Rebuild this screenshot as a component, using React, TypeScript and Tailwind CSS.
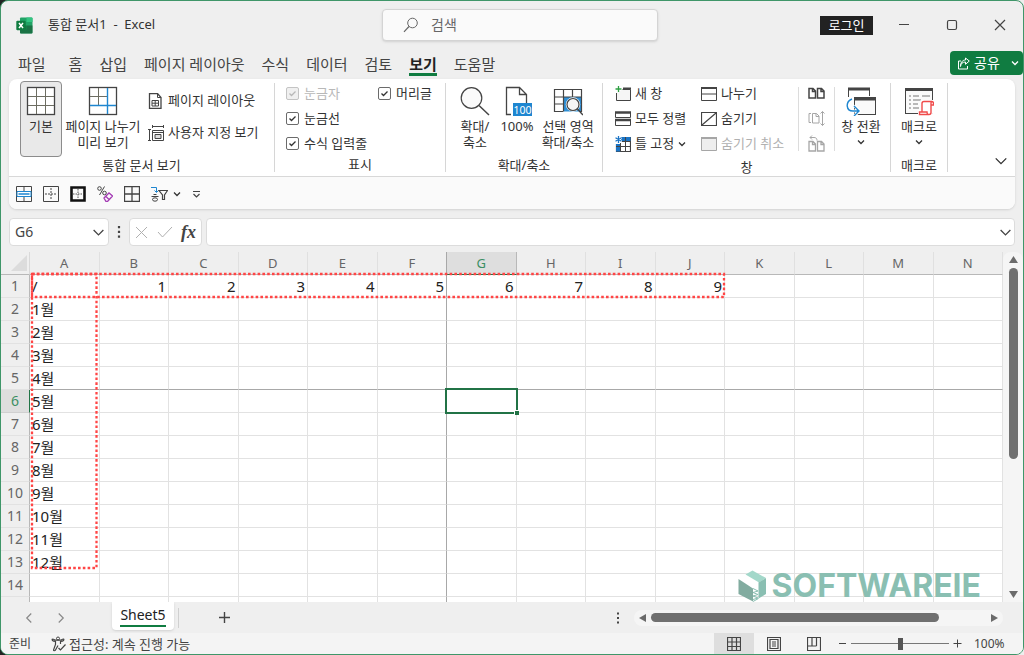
import React from 'react';

const menuTabs = ['홈', '삽입', '페이지 레이아웃', '수식', '데이터', '검토', '보기', '도움말'];
const columns = ['A', 'B', 'C', 'D', 'E', 'F', 'G', 'H', 'I', 'J', 'K', 'L', 'M', 'N'];
const rows = Array.from({ length: 14 }, (_, i) => i + 1);

const DARK = '#444444';
const BLUE = '#1e86d0';

function cellValue(row: number, col: number) {
  if (row === 1) {
    if (col === 0) return '/';
    return col <= 9 ? String(col) : '';
  }
  return col === 0 && row <= 13 ? `${row - 1}월` : '';
}

interface IconProps {
  size?: number;
  children: React.ReactNode;
  className?: string;
  color?: string;
}

function Icon({ size = 16, children, className = '', color = DARK }: IconProps) {
  return (
    <svg
      width={size}
      height={size}
      viewBox={`0 0 ${size} ${size}`}
      fill="none"
      stroke={color}
      className={`shrink-0 ${className}`}
      aria-hidden="true"
    >
      {children}
    </svg>
  );
}

function Chevron({ className = '', size = 8 }: { className?: string; size?: number }) {
  return (
    <svg width={size} height={size} viewBox="0 0 8 8" fill="none" stroke="currentColor" strokeWidth={size > 8 ? 0.8 : 1.3} className={`shrink-0 ${className}`} aria-hidden="true">
      <path d="M1 2.5 4 5.5 7 2.5" />
    </svg>
  );
}

const DocShape = ({ x, y }: { x: number; y: number }) => (
  <path d={`M${x} ${y}h4l2.500 2.500v7h-6.500zM${x + 3.5} ${y}v3h3`} />
);

function ExcelLogo() {
  return (
    <svg width="17" height="17" viewBox="0 0 17 17" className="shrink-0" aria-hidden="true">
      <rect x="4" y="0.5" width="12.5" height="16" rx="1" fill="#21a366" />
      <path d="M10.5.5h5a1 1 0 0 1 1 1v3.500h-6z" fill="#33c481" />
      <path d="M4 8.500h6.500v4H4z" fill="#107c41" />
      <path d="M4 12.500h12.500v3a1 1 0 0 1-1 1H5a1 1 0 0 1-1-1zM10.500 8.500h6v4h-6z" fill="#185c37" opacity=".7" />
      <rect x="0.300" y="3.800" width="9.400" height="9.400" rx="1" fill="#107c41" />
      <path d="M3 6l4 5M7 6l-4 5" stroke="#fff" strokeWidth="1.500" />
    </svg>
  );
}

function TitleBar() {
  return (
    <header className="flex h-12 items-center">
      <div className="flex flex-1 items-center gap-[15px] pl-[15px] text-[13px] text-[#333]">
        <ExcelLogo />
        <h1 className="whitespace-pre">통합 문서1  -  Excel</h1>
      </div>
      <label className="flex h-8 w-[276px] items-center gap-3 rounded border border-[#d4d4d4] bg-[#fafafa] pl-5 shadow-sm">
        <Icon color="#666">
          <circle cx="9.500" cy="6" r="4.800" />
          <path d="M6 9.500 1 14.800" strokeWidth="1.200" />
        </Icon>
        <input aria-label="검색" placeholder="검색" className="w-40 bg-transparent text-sm outline-none placeholder:text-[#666]" />
      </label>
      <div className="flex w-[365px] items-center justify-end text-[#333]">
        <button className="mr-[7px] h-[19px] w-[53px] bg-[#222] text-[13px] leading-[18px] text-white">로그인</button>
        <button aria-label="최소화" className="flex h-8 w-12 items-center justify-center">
          <Icon size={12}><path d="M1 5.500h10" /></Icon>
        </button>
        <button aria-label="최대화" className="flex h-8 w-12 items-center justify-center">
          <Icon size={12}><rect x="1.500" y="1.500" width="9" height="9" rx="1.500" strokeWidth="1.200" /></Icon>
        </button>
        <button aria-label="닫기" className="flex h-8 w-[47px] items-center justify-center">
          <Icon size={12}><path d="m1 1 10 10M11 1 1 11" strokeWidth="1.200" /></Icon>
        </button>
      </div>
    </header>
  );
}

function MenuTabs() {
  return (
    <nav className="flex h-[30px] items-start pl-[17px] text-[15px] leading-[30px] text-[#444]">
      <button className="mr-[23px]">파일</button>
      <div className="flex flex-1 gap-[17px]">
        {menuTabs.map((tab) => (
          <button
            key={tab}
            className={tab === '보기' ? 'h-[27px] border-b-[3px] border-[#107c41] font-bold text-[#222]' : 'h-[27px]'}
          >
            {tab}
          </button>
        ))}
      </div>
      <button className="mt-[2px] flex h-6 w-[73px] items-center rounded bg-[#107c41] pl-[7px] text-sm text-white">
        <Icon size={13} color="#fff">
          <path d="M4 4H1.500v8h9V9" />
          <path d="M3.500 9.500c.300-3 2-4.500 5-4.500v2.300L12.300 4 8.500 1v2c-3.500 0-5 3-5 6.500z" />
        </Icon>
        <span className="ml-1">공유</span>
        <Chevron className="ml-auto mr-1" />
      </button>
    </nav>
  );
}

interface GroupProps {
  label: string;
  width: string;
  children: React.ReactNode;
}

function RibbonGroup({ label, width, children }: GroupProps) {
  return (
    <section className={`my-1 flex shrink-0 flex-col border-r border-[#d6d6d6] ${width}`}>
      <div className="flex h-[76px]">{children}</div>
      <h2 className="text-center leading-4">{label}</h2>
    </section>
  );
}

interface LargeButtonProps {
  icon: React.ReactNode;
  lines: string[];
  active?: boolean;
  menu?: boolean;
  className?: string;
}

function LargeButton({ icon, lines, active, menu, className = '' }: LargeButtonProps) {
  return (
    <button
      className={`-mt-[2px] flex h-[76px] shrink-0 flex-col items-center rounded border pt-1 leading-4 ${
        active ? 'border-[#8c8c8c] bg-[#e9e9e9]' : 'border-transparent'
      } ${className}`}
    >
      {icon}
      <span className="mt-[2px] flex flex-col items-center whitespace-nowrap">
        {lines.map((line) => (
          <span key={line}>{line}</span>
        ))}
      </span>
      {menu ? <Chevron className="mt-1" /> : null}
    </button>
  );
}

interface SmallButtonProps {
  icon: React.ReactNode;
  label: string;
  disabled?: boolean;
  menu?: boolean;
}

function SmallButton({ icon, label, disabled, menu }: SmallButtonProps) {
  return (
    <button disabled={disabled} className="flex h-[25px] items-center gap-1 whitespace-nowrap disabled:text-[#b0b0b0]">
      {icon}
      <span>{label}</span>
      {menu ? <Chevron /> : null}
    </button>
  );
}

function CheckOption({ label, disabled }: { label: string; disabled?: boolean }) {
  return (
    <label className={`flex h-[25px] items-center gap-[5px] whitespace-nowrap ${disabled ? 'text-[#b8b8b8]' : ''}`}>
      <span className="grid size-[13px]">
        <input
          type="checkbox"
          defaultChecked
          disabled={disabled}
          className="size-[13px] appearance-none rounded-[2px] border border-[#6b6b6b] bg-white [grid-area:1/1] disabled:border-[#c4c4c4] disabled:bg-[#f0f0f0]"
        />
        <svg width="13" height="13" viewBox="0 0 13 13" fill="none" stroke="currentColor" strokeWidth="1.300" className="pointer-events-none [grid-area:1/1]" aria-hidden="true">
          <path d="m3.500 6.500 2 2L9.500 4.500" />
        </svg>
      </span>
      {label}
    </label>
  );
}

function ViewsGroup() {
  return (
    <RibbonGroup label="통합 문서 보기" width="w-[266px]">
      <LargeButton
        active
        className="ml-[11px] w-[42px]"
        lines={['기본']}
        icon={
          <Icon size={30}>
            <rect x="1.500" y="1.500" width="27" height="27" fill="#fff" strokeWidth="1.300" />
            <path d="M10.500 2v26M19.500 2v26M2 10.500h26M2 19.500h26" stroke="#6d6d62" />
          </Icon>
        }
      />
      <LargeButton
        className="ml-px w-20"
        lines={['페이지 나누기', '미리 보기']}
        icon={
          <Icon size={30}>
            <rect x="1.500" y="1.500" width="27" height="27" strokeWidth="1.300" />
            <path d="M10.500 2v17M2 10.500h17" stroke="#6d6d62" />
            <path d="M19.500 2v26M2 19.500h26" stroke={BLUE} strokeWidth="1.400" />
          </Icon>
        }
      />
      <div className="ml-[5px] mt-[5px] flex flex-col gap-[7px]">
        <SmallButton
          label="페이지 레이아웃"
          icon={
            <Icon>
              <path d="M1.500.500h8l3.500 4v11H1.500z" strokeWidth="1.300" />
              <path d="M9.500.500v4H13M4 7.500h6.500v5.500H4zM4 10.200h6.500M7.200 7.500V13" />
            </Icon>
          }
        />
        <SmallButton
          label="사용자 지정 보기"
          icon={
            <Icon>
              <path d="M0 4.500h3M0 15.500h3M1.500 4.500v11M4.500 1.500h11M4.500 0v3M15.500 0v3" />
              <path d="M4.500 5.500h11v10h-11zM4.500 7.500h11" />
              <path d="M7 9.500h6v4H7z" fill="#ddd" />
            </Icon>
          }
        />
      </div>
    </RibbonGroup>
  );
}

function ShowGroup() {
  return (
    <RibbonGroup label="표시" width="w-[171px]">
      <div className="ml-[11px] flex w-[92px] flex-col -mt-[2px]">
        <CheckOption label="눈금자" disabled />
        <CheckOption label="눈금선" />
        <CheckOption label="수식 입력줄" />
      </div>
      <div className="-mt-[2px]">
        <CheckOption label="머리글" />
      </div>
    </RibbonGroup>
  );
}

function ZoomGroup() {
  return (
    <RibbonGroup label="확대/축소" width="w-[157px]">
      <LargeButton
        className="ml-[7px] w-11"
        lines={['확대/', '축소']}
        icon={
          <Icon size={30}>
            <circle cx="11.500" cy="12" r="10.300" fill="#fafafa" strokeWidth="1.200" />
            <path d="m19 19.500 10 9.500" strokeWidth="1.500" />
          </Icon>
        }
      />
      <LargeButton
        className="w-10"
        lines={['100%']}
        icon={
          <Icon size={30}>
            <path d="M9 28.500H4.500v-27h13l7 7V17M17.500 1.500v7h7" strokeWidth="1.300" />
            <rect x="11" y="17" width="19" height="13" fill={BLUE} stroke="none" />
            <text x="20.500" y="27.500" textAnchor="middle" fontSize="10.500" fill="#fff" stroke="none">100</text>
          </Icon>
        }
      />
      <LargeButton
        className="w-[62px]"
        lines={['선택 영역', '확대/축소']}
        icon={
          <Icon size={30}>
            <path d="M10.500 11h18v14.500h-18z" fill="#2e8fd6" stroke="none" />
            <path d="M10 25.500H1.500v-22h27v22H27M1.500 11h27M1.500 18h9M10.500 3.500v22M19.500 3.500V11" strokeWidth="1.200" />
            <circle cx="20" cy="18.500" r="7.200" fill="#fff" stroke="none" />
            <circle cx="20" cy="18.500" r="6" fill="#f5f5f5" strokeWidth="1.200" />
            <path d="m24.500 23 5.500 6" strokeWidth="1.500" />
          </Icon>
        }
      />
    </RibbonGroup>
  );
}

function WindowGroup() {
  return (
    <RibbonGroup label="창" width="w-[288px]">
      <div className="-mt-[2px] ml-3 w-[86px]">
        <SmallButton
          label="새 창"
          icon={
            <Icon>
              <path d="M1.500 7v7.500h14V3.500h-8" fill="#f5f5f5" />
              <path d="M8 2.500h8" strokeWidth="2" />
              <path d="M3.500 0v6M.500 3h6" stroke="#2ea043" strokeWidth="1.300" />
            </Icon>
          }
        />
        <SmallButton
          label="모두 정렬"
          icon={
            <Icon>
              <path d="M.500 1.500h15v5H.500zM.500 9.500h15v5H.500z" />
              <path d="M0 1.500h16M0 9h16" strokeWidth="2.500" />
            </Icon>
          }
        />
        <SmallButton
          label="틀 고정"
          menu
          icon={
            <Icon>
              <path d="M8 1.500h7.500v14H1.500V8" strokeWidth="1.200" />
              <path d="M6 1h9.500v4H6zM1 8h4.500v7.500H1z" fill="#1b74c5" stroke="none" />
              <path d="M10.500 1v14.500M5.500 7v8.500M1 10.500h14.500M7 5.500h8.500" />
              <path d="M3.500 0v7M.500 1.700l6 3.500M6.500 1.700l-6 3.500" stroke="#fff" strokeWidth="2.500" />
              <path d="M3.500 0v7M.500 1.700l6 3.500M6.500 1.700l-6 3.500" stroke="#1b74c5" strokeWidth="1.300" />
            </Icon>
          }
        />
      </div>
      <div className="-mt-[2px] w-[97px]">
        <SmallButton
          label="나누기"
          icon={
            <Icon>
              <path d="M.500 1.500h15v13H.500zM.500 8h15" />
              <path d="M0 2h16" strokeWidth="2" />
            </Icon>
          }
        />
        <SmallButton
          label="숨기기"
          icon={<Icon><path d="M.500 1.500h15v13H.500zM1 14 15 2" strokeWidth="1.200" /></Icon>}
        />
        <SmallButton
          label="숨기기 취소"
          disabled
          icon={
            <Icon color="#a6a6a6">
              <path d="M.500 1.500h15v13H.500z" fill="#eee" />
              <path d="M0 2h16" strokeWidth="2" />
            </Icon>
          }
        />
      </div>
      <div className="mb-2 mt-1 flex border-x border-[#dcdcdc] px-[9px]">
        <div className="-mt-[6px] flex flex-col">
          <button aria-label="나란히 보기" className="h-[25px] shrink-0">
            <Icon size={17}><g strokeWidth="1.500"><DocShape x={1} y={3.5} /><DocShape x={9.5} y={3.5} /></g></Icon>
          </button>
          <button aria-label="동시 스크롤" disabled className="h-[25px] shrink-0">
            <Icon size={17} color="#a6a6a6">
              <path d="M3 3.500H1v9h2" />
              <DocShape x={4.5} y={3.5} />
              <path d="M14.500 1.500v14M12.500 3.500l2-2 2 2M12.500 13.500l2 2 2-2" />
            </Icon>
          </button>
          <button aria-label="창 위치 다시 정렬" disabled className="h-[25px] shrink-0">
            <Icon size={17} color="#a6a6a6">
              <g strokeWidth="1.300"><DocShape x={1} y={6.5} /><DocShape x={9.5} y={6.5} /></g>
              <path d="M2 2.500h4c2 0 3 1 3 3M4 .500 2 2.500l2 2" />
            </Icon>
          </button>
        </div>
      </div>
      <LargeButton
        className="w-[52px]"
        menu
        lines={['창 전환']}
        icon={
          <Icon size={30}>
            <path d="M2.500 11V2.500h21V10" />
            <path d="M2 3h22" strokeWidth="3" />
            <rect x="8.500" y="11.500" width="21" height="17" fill="#fafafa" />
            <path d="M8 13h22" strokeWidth="3" />
            <path d="M6 12c-7 3-7 13 1 13h6M8 19.500l5.500 5.500L8 30" stroke="#fff" strokeWidth="3" />
            <path d="M6 13c-7 3-6 12 1 12h5.500M8 20l5 5-5 5" stroke={BLUE} strokeWidth="1.400" />
          </Icon>
        }
      />
    </RibbonGroup>
  );
}

function MacroGroup() {
  return (
    <RibbonGroup label="매크로" width="w-[57px]">
      <LargeButton
        className="w-full"
        menu
        lines={['매크로']}
        icon={
          <Icon size={30}>
            <rect x="1.500" y="2.500" width="27" height="25" fill="#fafafa" />
            <path d="M1 3.500h28" strokeWidth="3" />
            <path d="M5 10h2M9 10h6M18 10h8M5 14h2M9 14h8M5 18h2M9 18h5M5 22h2M9 22h6" stroke="#777" />
            <path d="M18 15.500h11.500v3h-2v8.500a2 2 0 0 1-2 2H15.500v-3H18z" fill="#fff" stroke="#fff" strokeWidth="3" />
            <path
              d="M18 26V17.500a2 2 0 0 1 2-2h7.500a2 2 0 0 1 2 2v1.500H27v7.500a2 2 0 0 1-2 2h-9.500V26h7.500c0 3 2 2.500 2 2.500M27 19v-2c0-1 1-1.500 1-1.500"
              stroke="#f04b4b"
              strokeWidth="1.400"
            />
          </Icon>
        }
      />
    </RibbonGroup>
  );
}

function QuickAccess() {
  return (
    <div className="flex h-8 items-center gap-[11px] rounded-b-lg bg-[#fafafa] pt-[2px] pl-[7px]">
      <button aria-label="병합">
        <Icon>
          <path d="M.500.500h15v15H.500zM8 1v4M8 11v4M1 5.500h14M1 10.500h14" />
          <path d="M1 5.500h14v5H1z" stroke={BLUE} fill="#fff" />
          <path d="M2.500 8h11" stroke={BLUE} strokeWidth="1.500" />
        </Icon>
      </button>
      <button aria-label="바깥쪽 테두리">
        <Icon>
          <path d="M.500.500h15v15H.500z" />
          <path d="M8 2v12M2 8h12" strokeDasharray="2 1" />
        </Icon>
      </button>
      <button aria-label="굵은 바깥쪽 테두리">
        <Icon color="#111">
          <path d="M1.500 1.500h13v13h-13z" strokeWidth="2.600" />
          <path d="M8 3v10M3 8h10" strokeDasharray="1.500 1" stroke="#555" />
        </Icon>
      </button>
      <button aria-label="서식 지우기">
        <Icon>
          <circle cx="2.500" cy="2.500" r="1.800" />
          <circle cx="7.500" cy="7" r="1.800" />
          <path d="M7.500.500 2.500 9" />
          <path d="m7 12 5-5 3.500 3-5 5.500H9zM8.500 10l3.500 3.500" stroke="#a43db5" strokeWidth="1.300" />
        </Icon>
      </button>
      <button aria-label="모든 테두리">
        <Icon><path d="M.500.500h15v15H.500zM8 0v16M0 8h16" strokeWidth="1.300" /></Icon>
      </button>
      <button aria-label="필터" className="flex items-center gap-[5px]">
        <Icon size={17}>
          <path d="M0 1.500h5.500V6M3.500 4.500l2 2 2-2" stroke={BLUE} />
          <path d="M2.500 8.500h3M.500 10.500h7" />
          <ellipse cx="4" cy="13.500" rx="2.500" ry="1.700" />
          <path d="M8 4.500h8.500L13.500 9v4.500h-2V9z" strokeWidth="1.200" />
        </Icon>
        <Chevron />
      </button>
      <button aria-label="빠른 실행 도구 모음 사용자 지정">
        <Icon size={9}><path d="M1 1.500h7M1.500 4l3 3 3-3" strokeWidth="1.200" /></Icon>
      </button>
    </div>
  );
}

function Ribbon() {
  return (
    <div className="mx-2 rounded-lg bg-white text-[13px] text-[#333] shadow-sm">
      <div className="flex h-[98px] border-b border-[#d8d8d8]">
        <ViewsGroup />
        <ShowGroup />
        <ZoomGroup />
        <WindowGroup />
        <MacroGroup />
        <button aria-label="리본 축소" className="mb-2 ml-auto mr-[7px] self-end">
          <Chevron size={14} />
        </button>
      </div>
      <QuickAccess />
    </div>
  );
}

function FormulaBar() {
  return (
    <div className="mx-2 mt-[9px] mb-[6px] flex h-7 items-stretch text-[#444]">
      <div className="flex w-[100px] items-center rounded border border-[#dcdcdc] bg-white pl-[5px] pr-[3px]">
        <input aria-label="이름 상자" defaultValue="G6" className="min-w-0 flex-1 bg-transparent text-sm outline-none" />
        <button aria-label="이름 목록"><Chevron size={13} /></button>
      </div>
      <div className="flex w-5 items-center justify-center">
        <Icon size={12}><path d="M6 0v2.200M6 4.800V7M6 9.600v2.200" strokeWidth="2.200" /></Icon>
      </div>
      <div className="flex w-[73px] items-center justify-between rounded border border-[#dcdcdc] bg-white px-[5px]">
        <button aria-label="취소"><Icon size={13} color="#b0b0b0"><path d="m1 1 11 11M12 1 1 12" /></Icon></button>
        <button aria-label="입력"><Icon color="#b0b0b0"><path d="m1 8 4.500 5L15 3" /></Icon></button>
        <button aria-label="함수 삽입" className="font-['Liberation_Serif',serif] text-lg leading-5 font-bold italic">fx</button>
      </div>
      <div className="ml-1 flex flex-1 items-center rounded border border-[#dcdcdc] bg-white pr-[2px]">
        <input aria-label="수식 입력줄" className="flex-1 bg-transparent px-2 text-sm outline-none" />
        <button aria-label="수식 입력줄 확장"><Chevron size={13} /></button>
      </div>
    </div>
  );
}

function MarkedRange({ className }: { className: string }) {
  return (
    <svg className={`pointer-events-none absolute overflow-visible ${className}`} aria-hidden="true">
      <rect width="100%" height="100%" fill="none" stroke="#ff4545" strokeWidth="2.300" strokeDasharray="2.600 2.200" />
    </svg>
  );
}

function Watermark() {
  return (
    <div className="absolute right-[22px] bottom-0 flex h-8 items-center gap-[5px] text-[#8abfb2]">
      <svg width="29" height="32" viewBox="0 0 29 32" aria-hidden="true">
        <path d="M7.500 4.500 14.500.500 28 8l-7 4.500z" fill="#a3d8ca" />
        <path d="M28 8v16l-7.500 4.500v-16z" fill="#8abfb2" />
        <path d="M.500 9 15 18.500v13L.500 24z" fill="#82aca0" />
        <path d="m15 18.500 5 2.500-5 1.500 5 2-5 1.500 5 2-5 1.500M15 31.500l5.500-3" fill="none" stroke="#8abfb2" />
      </svg>
      <span className="font-[Inter,sans-serif] text-[32px] leading-10 font-bold">SOFTWAREIE</span>
    </div>
  );
}

function Sheet() {
  return (
    <div className="relative min-w-0 flex-1">
      <div className="flex h-full flex-col overflow-hidden">
        <table className="w-full table-fixed border-separate border-spacing-0 bg-white">
          <thead>
            <tr className="h-[23px] bg-[#efefef] text-[13px] text-[#666]">
              <th className="w-[29px] border-r border-b border-r-[#d9d9d9] border-b-[#b8b8b8] p-0">
                <svg width="17" height="17" viewBox="0 0 17 17" className="ml-[10px]" aria-hidden="true">
                  <path d="M16 0v16H0z" fill="#dcdcdc" />
                </svg>
              </th>
              {columns.map((name) => (
                <th
                  key={name}
                  scope="col"
                  className={`border-r border-b p-0 leading-[20px] font-normal ${
                    name === 'G'
                      ? 'border-r-[#b8b8b8] border-b-[#217346] bg-[#dedede] text-[#3b8f63]'
                      : name === 'F'
                        ? 'border-r-[#a8a8a8] border-b-[#b8b8b8]'
                        : 'border-r-[#e0e0e0] border-b-[#b8b8b8]'
                  }`}
                >
                  {name}
                </th>
              ))}
            </tr>
          </thead>
          <tbody>
            {rows.map((row) => (
              <tr key={row} className="h-[23px] text-[15px] text-[#222]">
                <th
                  scope="row"
                  className={`border-r border-b p-0 text-sm leading-[22px] font-normal ${
                    row === 6
                      ? 'border-r-[#217346] border-b-[#d0d0d0] bg-[#dedede] text-[#3b8f63]'
                      : 'border-r-[#b8b8b8] border-b-[#e2e2e2] bg-[#efefef] text-[#666]'
                  }`}
                >
                  {row}
                </th>
                {columns.map((name, col) => (
                  <td
                    key={name}
                    className={`relative border-r border-b p-0 px-[2px] leading-[22px] whitespace-nowrap ${
                      name === 'F' ? 'border-r-[#a8a8a8]' : 'border-r-[#e2e2e2]'
                    } ${row === 5 ? 'border-b-[#a8a8a8]' : 'border-b-[#e2e2e2]'} ${
                      row === 1 && col > 0 ? 'text-right' : ''
                    }`}
                  >
                    {cellValue(row, col)}
                    {row === 6 && name === 'G' ? (
                      <span className="absolute -inset-[2px] z-10 border-2 border-[#217346]">
                        <span className="absolute -right-[3px] -bottom-[3px] size-[5px] border-t border-l border-white bg-[#217346]" />
                      </span>
                    ) : null}
                  </td>
                ))}
              </tr>
            ))}
            <tr className="h-[23px]">
              <td className="border-r border-[#b8b8b8] bg-[#efefef] p-0" />
              {columns.map((name) => (
                <td key={name} className={`border-r p-0 ${name === 'F' ? 'border-[#a8a8a8]' : 'border-[#e2e2e2]'}`} />
              ))}
            </tr>
          </tbody>
        </table>
      </div>
      <MarkedRange className="top-[22px] left-[31px] h-[23px] w-[calc((100%-29px)/14*10-3px)]" />
      <MarkedRange className="top-[22px] left-[31px] h-[294px] w-[calc((100%-29px)/14-5px)]" />
      <Watermark />
    </div>
  );
}

function VerticalScroll() {
  return (
    <div className="flex w-5 flex-col items-center gap-1 rounded-t-lg bg-[#f5f5f5] py-[3px]">
      <button aria-label="위로 스크롤">
        <Icon size={9} color="none"><path d="M4.500 1 9 8H0z" fill="#6b6b6b" /></Icon>
      </button>
      <div className="flex-1">
        <div className="h-3/5 w-[9px] rounded-full bg-[#707070]" />
      </div>
      <button aria-label="아래로 스크롤">
        <Icon size={9} color="none"><path d="M0 1h9L4.500 8z" fill="#6b6b6b" /></Icon>
      </button>
    </div>
  );
}

function SheetTabs() {
  return (
    <div className="flex h-[31px] shrink-0 items-center text-[#444]">
      <button aria-label="이전 시트" className="ml-[22px]"><Chevron size={12} className="rotate-90 text-[#888]" /></button>
      <button aria-label="다음 시트" className="ml-5"><Chevron size={12} className="-rotate-90 text-[#888]" /></button>
      <button className="mb-[3px] ml-[45px] flex h-7 w-[62px] items-start justify-center self-start rounded-b bg-white shadow-sm">
        <span className="h-[25px] border-b-2 border-[#107c41] text-sm leading-[25px] text-[#222]">Sheet5</span>
      </button>
      <div className="ml-1 h-5 w-px bg-[#d0d0d0]" />
      <button aria-label="새 시트" className="ml-[39px]">
        <Icon size={13}><path d="M6.500 1v11M1 6.500h11" strokeWidth="1.400" /></Icon>
      </button>
      <div className="ml-auto flex w-[411px] items-center">
        <Icon size={12} className="mr-[10px]"><path d="M6 .500v2M6 5v2M6 9.500v2" strokeWidth="2" /></Icon>
        <div className="mr-5 flex h-4 flex-1 items-center rounded-full bg-[#f5f5f5] px-[5px]">
          <button aria-label="왼쪽으로 스크롤">
            <Icon size={8} color="none"><path d="M7 0v8L0 4z" fill="#6b6b6b" /></Icon>
          </button>
          <div className="mx-1 flex-1">
            <div className="h-[9px] w-[86%] rounded-full bg-[#707070]" />
          </div>
          <button aria-label="오른쪽으로 스크롤">
            <Icon size={8} color="none"><path d="M1 0v8l7-4z" fill="#6b6b6b" /></Icon>
          </button>
        </div>
      </div>
    </div>
  );
}

function StatusBar() {
  return (
    <footer className="flex h-[21px] shrink-0 items-center bg-[#f4f4f4] text-xs text-[#444]">
      <span className="ml-2 w-[42px]">준비</span>
      <button className="flex items-center gap-[2px] text-[13px] leading-5">
        <Icon>
          <circle cx="7" cy="2.500" r="1.500" />
          <path d="M1.500 3c-1 1 0 2 3 2.500v3l-2 5.500c0 1 1.500 1 2 0L7 9.500M9.500 8V5.500c3-.500 4-1.500 3-2.500-1.500 0-2 1-3 1.200H4.500C3.500 4 3 3 1.500 3M7.500 12l2 2 5-5.500" strokeWidth="1.200" />
        </Icon>
        접근성: 계속 진행 가능
      </button>
      <div className="ml-auto flex h-full items-center">
        <button aria-label="기본 보기" className="flex h-full w-10 items-center justify-center bg-[#dedede]">
          <Icon size={14}><path d="M.500.500h13v13H.500zM5 0v14M9.500 0v14M0 5h14M0 9.500h14" strokeWidth="1.200" /></Icon>
        </button>
        <button aria-label="페이지 레이아웃 보기" className="flex h-full w-10 items-center justify-center">
          <Icon size={14}><path d="M.500.500h13v13H.500zM3 2.500h8v9H3zM5 5h4M5 7h4M5 9h4" strokeWidth="1.200" /></Icon>
        </button>
        <button aria-label="페이지 나누기 미리 보기" className="flex h-full w-10 items-center justify-center">
          <Icon size={14}><path d="M.500.500h13v13H.500zM5 1v8M9.500 1v8M1 9h8.500" strokeWidth="1.200" /></Icon>
        </button>
        <button aria-label="축소" className="ml-1"><Icon size={9}><path d="M1 4.500h7" /></Icon></button>
        <input
          type="range"
          aria-label="확대/축소"
          min={0}
          max={100}
          defaultValue={50}
          className="mx-1 h-3 w-[98px] appearance-none bg-transparent bg-[linear-gradient(#777,#777)] bg-[length:100%_1px] bg-center bg-no-repeat [&::-webkit-slider-thumb]:h-3 [&::-webkit-slider-thumb]:w-[5px] [&::-webkit-slider-thumb]:appearance-none [&::-webkit-slider-thumb]:bg-[#555]"
        />
        <button aria-label="확대"><Icon size={9}><path d="M.500 4.500h8M4.500.500v8" /></Icon></button>
        <span className="ml-3 w-[49px]">100%</span>
      </div>
    </footer>
  );
}

export default function App() {
  return (
    <div className="h-screen bg-linear-to-r from-[#222] to-[#eee] font-['Noto_Sans','Noto_Sans_CJK_KR',sans-serif]">
      <div className="flex h-full flex-col overflow-hidden rounded-lg border border-[#3f9669] bg-[#efefef]">
        <TitleBar />
        <MenuTabs />
        <Ribbon />
        <FormulaBar />
        <main className="flex min-h-0 flex-1">
          <Sheet />
          <VerticalScroll />
        </main>
        <SheetTabs />
        <StatusBar />
      </div>
    </div>
  );
}
